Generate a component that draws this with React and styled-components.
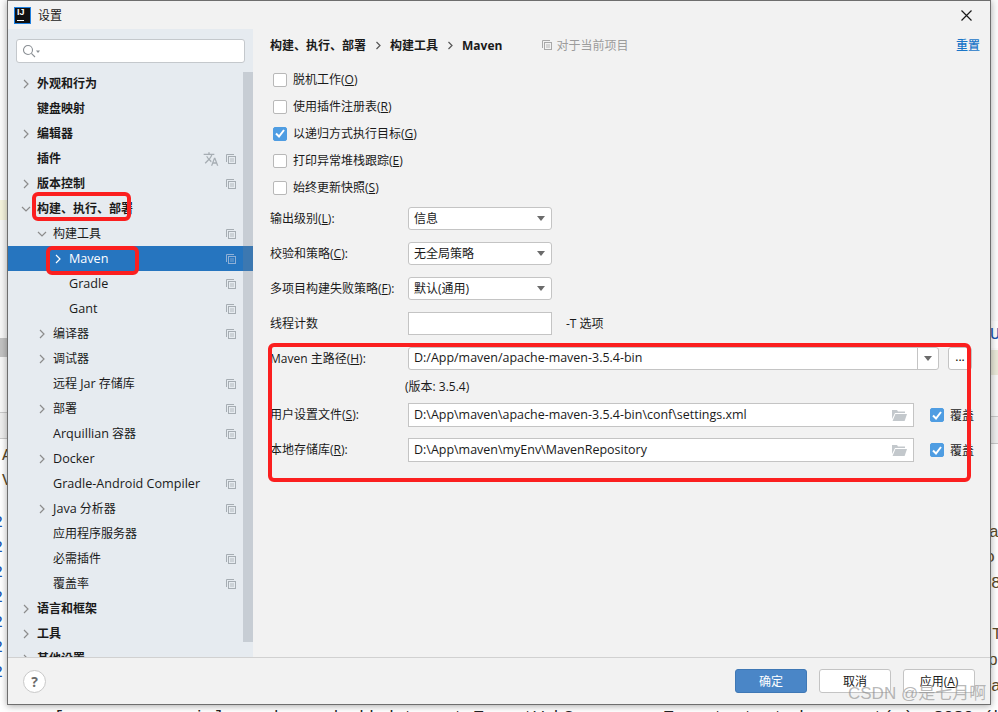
import React from "react";
import styled, { createGlobalStyle } from "styled-components";
import { MdTranslate } from "react-icons/md";

const GlobalStyle = createGlobalStyle`
  html, body {
    margin: 0;
    padding: 0;
    background: #fff;
  }
  * {
    box-sizing: border-box;
  }
`;

const uiFont = `"Open Sans", "Noto Sans CJK SC", sans-serif`;

const Page = styled.div`
  position: relative;
  width: 998px;
  height: 712px;
  overflow: hidden;
  display: flex;
  flex-direction: column;
  font-family: ${uiFont};
  font-size: 12px;
  color: #1a1a1a;
  background: #fff;
`;

/* what is left visible of the editor behind the dialog */
const Behind = styled.div`
  flex: 1;
  display: flex;
  justify-content: space-between;
  min-height: 0;
`;

const Strip = styled.div`
  width: ${p => p.$width}px;
  display: flex;
  flex-direction: column;
  overflow: hidden;
`;

const Band = styled.div`
  height: ${p => p.$h}px;
  flex: none;
  background: ${p => p.$bg || "#fff"};
  border-top: ${p => (p.$line ? "1px solid #c9c9c9" : "none")};
`;

const Frag = styled.div`
  height: ${p => p.$h || 25}px;
  flex: none;
  line-height: ${p => p.$h || 25}px;
  margin-left: ${p => p.$shift || 0}px;
  font-family: "Liberation Mono", monospace;
  font-size: 16.67px;
  color: ${p => p.$color || "#5a4a2a"};
`;

const LogLine = styled.div`
  height: 7px;
  flex: none;
  padding: 5px 0 0 54px;
  overflow: hidden;
  white-space: pre;
  font-family: "Liberation Mono", monospace;
  font-size: 16.67px;
  line-height: 16px;
  color: #222;
`;

const Dialog = styled.div`
  position: absolute;
  left: 7px;
  top: 0;
  width: 984px;
  height: 705px;
  display: flex;
  flex-direction: column;
  background: #f2f2f2;
  border: 1px solid #6e6e6e;
  box-shadow: 0 1px 7px rgba(0, 0, 0, 0.35);
`;

const TitleBar = styled.div`
  height: 28px;
  flex: none;
  display: flex;
  align-items: center;
  padding: 0 18px 0 7px;
  background: #f2f2f2;
`;

const Logo = styled.div`
  width: 15px;
  height: 15px;
  flex: none;
  position: relative;
  background: #111;
  outline: 1px solid #1d7fe0;
  color: #fff;
  font-family: "Liberation Sans", sans-serif;
  font-size: 9px;
  font-weight: 700;
  line-height: 9px;
  padding-left: 2px;
  &::after {
    content: "";
    position: absolute;
    left: 2px;
    bottom: 2px;
    width: 7px;
    height: 1px;
    background: #fff;
  }
`;

const TitleText = styled.span`
  margin-left: 8px;
  flex: 1;
`;

const Body = styled.div`
  flex: 1;
  display: flex;
  min-height: 0;
`;

const Sidebar = styled.div`
  position: relative;
  width: 245px;
  flex: none;
  overflow: hidden;
  background: #e6ebf0;
`;

const SearchBox = styled.div`
  height: 24px;
  margin: 10px 8px 8px;
  display: flex;
  align-items: center;
  padding-left: 5px;
  background: #fff;
  border: 1px solid #c4c8cc;
  border-radius: 3px;
`;

const ScrollThumb = styled.div`
  position: absolute;
  right: 0;
  top: 43px;
  width: 10px;
  height: 570px;
  background: rgba(120, 130, 140, 0.28);
`;

const Row = styled.div`
  height: 25px;
  display: flex;
  align-items: center;
  padding: 0 17px 0 ${p => 13 + p.$level * 16}px;
  background: ${p => (p.$selected ? "#2675bf" : "transparent")};
  color: ${p => (p.$selected ? "#fff" : "#1a1a1a")};
  font-weight: ${p => (p.$level === 0 ? 700 : 400)};
  white-space: nowrap;
`;

const ChevronSlot = styled.span`
  width: 16px;
  flex: none;
  display: flex;
  align-items: center;
`;

const RowLabel = styled.span`
  flex: 1;
  padding-bottom: ${p => (p.$cjk ? 2 : 0)}px;
`;

const RowIcons = styled.span`
  display: flex;
  align-items: center;
  gap: 7px;
  color: #a6adb3;
`;

const Latin = styled.span`
  font-size: 12.6px;
`;

const Main = styled.div`
  flex: 1;
  min-width: 0;
  padding: 0 10px 0 17px;
`;

const Header = styled.div`
  height: 32px;
  display: flex;
  align-items: center;
`;

const Crumb = styled.span`
  font-weight: 700;
`;

const CrumbGap = styled.span`
  width: 24px;
  display: flex;
  justify-content: center;
  color: #555;
`;

const Scope = styled.span`
  flex: 1;
  display: flex;
  align-items: center;
  gap: 4px;
  margin-left: 40px;
  color: #9c9c9c;
`;

const ResetLink = styled.a`
  color: #1a76c8;
  font-weight: 500;
`;

const CheckList = styled.div`
  margin: 5px 0 6px 3px;
`;

const CheckRow = styled.label`
  height: 27px;
  display: flex;
  align-items: center;
  gap: 6px;
`;

const CheckText = styled.span`
  padding-bottom: 2px;
`;

const Box = styled.span`
  width: 14px;
  height: 14px;
  flex: none;
  display: flex;
  align-items: center;
  justify-content: center;
  border-radius: 2px;
  background: ${p => (p.$checked ? "#4f9de2" : "#fff")};
  border: 1px solid ${p => (p.$checked ? "#4f9de2" : "#b8b8b8")};
`;

const Form = styled.div`
  display: flex;
  flex-direction: column;
`;

const FormRow = styled.div`
  height: ${p => p.$h || 23}px;
  margin-bottom: ${p => p.$gap ?? 12}px;
  display: flex;
  align-items: center;
`;

const FormLabel = styled.span`
  width: 138px;
  flex: none;
  padding-bottom: 2px;
  white-space: nowrap;
`;

const Field = styled.div`
  width: ${p => p.$width}px;
  height: 100%;
  flex: none;
  display: flex;
  align-items: center;
  padding-left: 5px;
  background: #fff;
  border: 1px solid #c4c4c4;
  border-radius: ${p => (p.$round ? 3 : 0)}px;
  white-space: nowrap;
`;

const FieldText = styled.span`
  flex: 1;
  padding-bottom: 2px;
  font-size: ${p => (p.$path ? 12.48 : 12)}px;
`;

const Arrow = styled.span`
  width: 0;
  height: 0;
  flex: none;
  margin-right: 6px;
  border-left: 4px solid transparent;
  border-right: 4px solid transparent;
  border-top: 5px solid #6b6b6b;
`;

const ArrowCell = styled.span`
  width: 21px;
  height: 100%;
  flex: none;
  display: flex;
  align-items: center;
  justify-content: center;
  border-left: 1px solid #c4c4c4;
  ${Arrow} {
    margin-right: 0;
  }
`;

const Hint = styled.span`
  margin-left: 14px;
  padding-bottom: 2px;
`;

const BrowseButton = styled.button`
  width: 24px;
  height: 100%;
  margin-left: 9px;
  padding: 0 0 4px;
  font: inherit;
  background: #fff;
  border: 1px solid #c4c4c4;
  border-radius: 3px;
`;

const VersionText = styled.span`
  margin-left: 135px;
  padding-bottom: 2px;
`;

const FolderSlot = styled.span`
  margin-right: 6px;
  display: flex;
`;

const Override = styled.span`
  display: flex;
  align-items: center;
  gap: 6px;
  margin-left: 16px;
`;

const Footer = styled.div`
  height: 47px;
  flex: none;
  display: flex;
  align-items: center;
  justify-content: space-between;
  padding: 0 15px;
  border-top: 1px solid #d1d1d1;
`;

const HelpButton = styled.div`
  width: 23px;
  height: 23px;
  display: flex;
  align-items: center;
  justify-content: center;
  background: #fff;
  border: 1px solid #c9c9c9;
  border-radius: 50%;
  color: #6b6b6b;
  font-size: 14px;
  font-weight: 700;
`;

const Actions = styled.div`
  display: flex;
  gap: 12px;
`;

const ActionButton = styled.button`
  width: 72px;
  height: 24px;
  padding: 0;
  font: inherit;
  border-radius: 3px;
  background: ${p => (p.$primary ? "#4a86c7" : "#fff")};
  color: ${p => (p.$primary ? "#fff" : "#1a1a1a")};
  border: 1px solid ${p => (p.$primary ? "#3f78b5" : "#c4c4c4")};
`;

/* red marks someone drew over the screenshot */
const Mark = styled.div`
  position: absolute;
  left: ${p => p.$x}px;
  top: ${p => p.$y}px;
  width: ${p => p.$w}px;
  height: ${p => p.$h}px;
  border: 4px solid #fb1f1f;
  border-radius: 6px;
`;

const Watermark = styled.div`
  position: absolute;
  left: 848px;
  top: 684px;
  font-family: "Liberation Sans", "Noto Sans CJK SC", sans-serif;
  font-size: 17px;
  line-height: 20px;
  white-space: nowrap;
  color: rgba(140, 140, 140, 0.62);
`;

const Chevron = ({ open, color = "#8c8c8c" }) => (
  <svg width="10" height="10" viewBox="0 0 10 10" fill="none" stroke={color} strokeWidth="1.2">
    {open ? <path d="M1 3l4 4 4-4" /> : <path d="M3 1l4 4-4 4" />}
  </svg>
);

const CopyIcon = ({ color = "#a6adb3" }) => (
  <svg width="10" height="10" viewBox="0 0 10 10" fill="none" stroke={color} strokeWidth="1">
    <path d="M.5 8V.5H8" />
    <rect x="2.5" y="2.5" width="7" height="7" />
    <path d="M4 5h4M4 7h4" strokeWidth=".8" />
  </svg>
);

const SmallChevron = () => (
  <svg width="7" height="9" viewBox="0 0 7 9" fill="none" stroke="#555" strokeWidth="1.2">
    <path d="M1.5 1l3.5 3.5L1.5 8" />
  </svg>
);

const SearchIcon = () => (
  <svg width="18" height="14" viewBox="0 0 18 14" fill="none" stroke="#8a8f94" strokeWidth="1.1">
    <circle cx="6" cy="6" r="4.5" />
    <path d="M9.4 9.4L13 13" />
    <path d="M14 6.5h4l-2 2.5z" fill="#8a8f94" stroke="none" />
  </svg>
);

const CloseIcon = () => (
  <svg width="11" height="11" viewBox="0 0 11 11" fill="none" stroke="#1a1a1a" strokeWidth="1.2">
    <path d="M.5.5l10 10M10.5.5l-10 10" />
  </svg>
);

const CheckMark = () => (
  <svg width="10" height="9" viewBox="0 0 10 9" fill="none" stroke="#fff" strokeWidth="2">
    <path d="M1 4.5l3 3 5-6.5" />
  </svg>
);

const FolderIcon = () => (
  <svg width="15" height="12" viewBox="0 0 15 12">
    <path d="M0 1h5l1 1.5h7V4H3L0 10z" fill="#c3c8cc" />
    <path d="M3.4 5H15l-2.4 7H0.6z" fill="#c3c8cc" />
  </svg>
);

const tree = [
  { label: "外观和行为", level: 0, arrow: "closed" },
  { label: "键盘映射", level: 0 },
  { label: "编辑器", level: 0, arrow: "closed" },
  { label: "插件", level: 0, copy: true, translate: true },
  { label: "版本控制", level: 0, arrow: "closed", copy: true },
  { label: "构建、执行、部署", level: 0, arrow: "open" },
  { label: "构建工具", level: 1, arrow: "open", copy: true },
  { label: "Maven", level: 2, arrow: "closed", copy: true, selected: true },
  { label: "Gradle", level: 2, copy: true },
  { label: "Gant", level: 2, copy: true },
  { label: "编译器", level: 1, arrow: "closed", copy: true },
  { label: "调试器", level: 1, arrow: "closed" },
  { label: "远程 Jar 存储库", level: 1, copy: true },
  { label: "部署", level: 1, arrow: "closed", copy: true },
  { label: "Arquillian 容器", level: 1, copy: true },
  { label: "Docker", level: 1, arrow: "closed" },
  { label: "Gradle-Android Compiler", level: 1, copy: true },
  { label: "Java 分析器", level: 1, arrow: "closed", copy: true },
  { label: "应用程序服务器", level: 1 },
  { label: "必需插件", level: 1, copy: true },
  { label: "覆盖率", level: 1, copy: true },
  { label: "语言和框架", level: 0, arrow: "closed" },
  { label: "工具", level: 0, arrow: "closed" },
  { label: "其他设置", level: 0, arrow: "closed" },
];

const options = [
  { text: "脱机工作", key: "O" },
  { text: "使用插件注册表", key: "R" },
  { text: "以递归方式执行目标", key: "G", checked: true },
  { text: "打印异常堆栈跟踪", key: "E" },
  { text: "始终更新快照", key: "S" },
];

const selects = [
  { text: "输出级别", key: "L", value: "信息" },
  { text: "校验和策略", key: "C", value: "无全局策略" },
  { text: "多项目构建失败策略", key: "F", value: "默认(通用)" },
];

const leftFrags = [
  { ch: "A", h: 25, shift: 2 },
  { ch: "V", h: 25, shift: 2 },
];

const rightFrags = [
  { ch: "T", h: 26, shift: 1 },
  { ch: "p", h: 26, shift: -3 },
  { ch: "a", h: 26, shift: 0 },
];

const hasCjk = text => /[^\x00-\x7f]/.test(text);

// latin words in the labels run a little wider than the chinese next to them
const splitLatin = text =>
  text.split(/([A-Za-z-][A-Za-z -]*[A-Za-z])/).map((part, i) =>
    i % 2 ? <Latin key={i}>{part}</Latin> : part
  );

const Mnemonic = ({ text, k, colon }) => (
  <>
    {text}(<u>{k}</u>){colon ? ":" : ""}
  </>
);

const App = () => (
  <Page>
    <GlobalStyle />
    <Behind>
      <Strip $width={7}>
        <Band $h={200} $bg="#fbfbfb" />
        <Band $h={20} $bg="#f5f3dc" />
        <Band $h={118} $bg="#f7f7f7" />
        <Band $h={19} $bg="#c2c2c2" />
        <Band $h={55} $bg="#f7f7f7" />
        <Band $h={26} $bg="#eeeeee" $line />
        <Band $h={5} $line />
        {leftFrags.map((f, i) => (
          <Frag key={i} $h={f.h} $shift={f.shift}>
            {f.ch}
          </Frag>
        ))}
        <Band $h={17} />
        {[0, 1, 2, 3, 4, 5, 6].map(i => (
          <Frag key={i} $color="#1b55b0" $shift={-7}>
            2
          </Frag>
        ))}
      </Strip>
      <Strip $width={7}>
        <Band $h={321} $bg="#fbfbfb" />
        <Frag $color="#1b55b0" $h={27} $shift={-1}>
          U
        </Frag>
        <Band $h={2} $bg="#fbfbfb" />
        <Band $h={25} $bg="#e9e8d8" />
        <Band $h={41} $bg="#f7f7f7" />
        <Band $h={27} $bg="#eeeeee" $line />
        <Band $h={77} $line />
        <Frag $h={25} $shift={-2}>
          a
        </Frag>
        <Frag $h={26} $shift={-6}>
          o
        </Frag>
        <Frag $h={26}>8</Frag>
        <Band $h={25} />
        {rightFrags.map((f, i) => (
          <Frag key={i} $h={f.h} $shift={f.shift}>
            {f.ch}
          </Frag>
        ))}
      </Strip>
    </Behind>
    <LogLine>{"[           main] o.s.b.w.embedded.tomcat.TomcatWebServer  : Tomcat started on port(s): 8080 (http)"}</LogLine>

    <Dialog>
      <TitleBar>
        <Logo>IJ</Logo>
        <TitleText>设置</TitleText>
        <CloseIcon />
      </TitleBar>
      <Body>
        <Sidebar>
          <SearchBox>
            <SearchIcon />
          </SearchBox>
          {tree.map(item => (
            <Row key={item.label} $level={item.level} $selected={item.selected}>
              <ChevronSlot>
                {item.arrow && (
                  <Chevron open={item.arrow === "open"} color={item.selected ? "#fff" : "#8c8c8c"} />
                )}
              </ChevronSlot>
              <RowLabel $cjk={hasCjk(item.label)}>{splitLatin(item.label)}</RowLabel>
              <RowIcons>
                {item.translate && <MdTranslate size={16} />}
                {item.copy && <CopyIcon color={item.selected ? "#8fb0d6" : "#a6adb3"} />}
              </RowIcons>
            </Row>
          ))}
          <ScrollThumb />
        </Sidebar>
        <Main>
          <Header>
            <Crumb>构建、执行、部署</Crumb>
            <CrumbGap>
              <SmallChevron />
            </CrumbGap>
            <Crumb>构建工具</Crumb>
            <CrumbGap>
              <SmallChevron />
            </CrumbGap>
            <Crumb>Maven</Crumb>
            <Scope>
              <CopyIcon color="#a8a8a8" />
              对于当前项目
            </Scope>
            <ResetLink>重置</ResetLink>
          </Header>
          <CheckList>
            {options.map(o => (
              <CheckRow key={o.key}>
                <Box $checked={o.checked}>{o.checked && <CheckMark />}</Box>
                <CheckText>
                  <Mnemonic text={o.text} k={o.key} />
                </CheckText>
              </CheckRow>
            ))}
          </CheckList>
          <Form>
            {selects.map(s => (
              <FormRow key={s.key}>
                <FormLabel>
                  <Mnemonic text={s.text} k={s.key} colon />
                </FormLabel>
                <Field $width={144} $round>
                  <FieldText>{s.value}</FieldText>
                  <Arrow />
                </Field>
              </FormRow>
            ))}
            <FormRow>
              <FormLabel>线程计数</FormLabel>
              <Field $width={144} />
              <Hint>-T 选项</Hint>
            </FormRow>
            <FormRow $gap={0}>
              <FormLabel>
                <Mnemonic text="Maven 主路径" k="H" colon />
              </FormLabel>
              <Field $width={531} $round>
                <FieldText $path>D:/App/maven/apache-maven-3.5.4-bin</FieldText>
                <ArrowCell>
                  <Arrow />
                </ArrowCell>
              </Field>
              <BrowseButton>...</BrowseButton>
            </FormRow>
            <FormRow $h={33} $gap={0}>
              <VersionText>(版本: 3.5.4)</VersionText>
            </FormRow>
            <FormRow $h={24} $gap={11}>
              <FormLabel>
                <Mnemonic text="用户设置文件" k="S" colon />
              </FormLabel>
              <Field $width={506}>
                <FieldText $path>D:\App\maven\apache-maven-3.5.4-bin\conf\settings.xml</FieldText>
                <FolderSlot>
                  <FolderIcon />
                </FolderSlot>
              </Field>
              <Override>
                <Box $checked>
                  <CheckMark />
                </Box>
                覆盖
              </Override>
            </FormRow>
            <FormRow $h={24} $gap={0}>
              <FormLabel>
                <Mnemonic text="本地存储库" k="R" colon />
              </FormLabel>
              <Field $width={506}>
                <FieldText $path>D:\App\maven\myEnv\MavenRepository</FieldText>
                <FolderSlot>
                  <FolderIcon />
                </FolderSlot>
              </Field>
              <Override>
                <Box $checked>
                  <CheckMark />
                </Box>
                覆盖
              </Override>
            </FormRow>
          </Form>
        </Main>
      </Body>
      <Footer>
        <HelpButton>?</HelpButton>
        <Actions>
          <ActionButton $primary>确定</ActionButton>
          <ActionButton>取消</ActionButton>
          <ActionButton>
            应用(<u>A</u>)
          </ActionButton>
        </Actions>
      </Footer>
    </Dialog>

    <Mark $x={32} $y={192} $w={99} $h={29} />
    <Mark $x={46} $y={246} $w={93} $h={29} />
    <Mark $x={268} $y={343} $w={703} $h={139} />
    <Watermark>CSDN @是七月啊</Watermark>
  </Page>
);

export default App;
